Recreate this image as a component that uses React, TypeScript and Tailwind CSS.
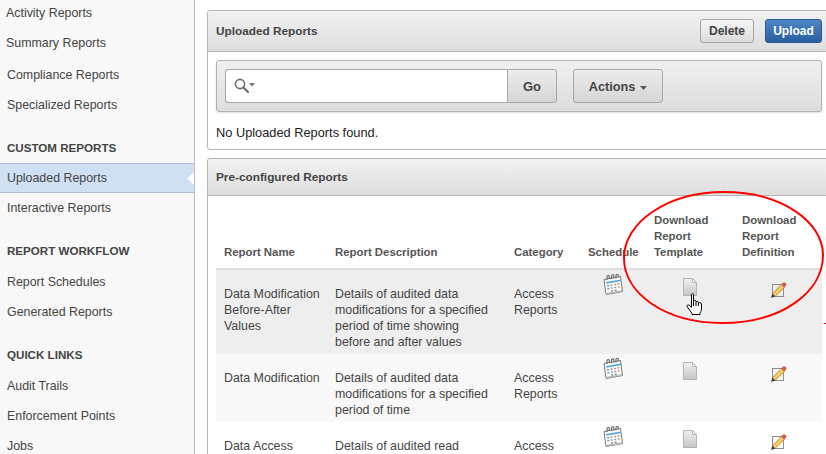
import React from 'react';

type NavItem = { label: string; shift?: boolean; size?: string; active?: boolean };

const CalendarIcon = () => (
  <svg width="22" height="22" viewBox="0 0 22 22" className="block">
    <path d="M2 5.5 L18.5 2.5 L20.5 17.5 L4 20.5 Z" fill="#fff" stroke="#777" strokeWidth="1" />
    <path d="M3 19 L4 20.5 L20.5 17.5 L20 16 Z" fill="#bbb" />
    <path d="M4 8 L18.5 5.5 L18.9 7.2 L4.3 9.7 Z" fill="#5aa8dc" />
    <g fill="#8a8a8a">
      <rect x="5" y="11" width="2" height="1.4" />
      <rect x="8.5" y="10.4" width="2" height="1.4" />
      <rect x="12" y="9.8" width="2" height="1.4" fill="#d08a70" />
      <rect x="15.5" y="9.2" width="2" height="1.4" />
      <rect x="5.3" y="14" width="2" height="1.4" />
      <rect x="8.8" y="13.4" width="2" height="1.4" fill="#5aa8dc" />
      <rect x="12.3" y="12.8" width="2" height="1.4" />
      <rect x="15.8" y="12.2" width="2" height="1.4" fill="#d08a70" />
      <rect x="9" y="16.2" width="2" height="1.4" />
      <rect x="12.6" y="15.6" width="2" height="1.4" />
    </g>
    <g fill="none" stroke="#666" strokeWidth="1.1">
      <path d="M5 6 V2.6 a1.2 1.2 0 0 1 2.3 -0.3 V5" />
      <path d="M9.5 5.2 V1.9 a1.2 1.2 0 0 1 2.3 -0.3 V4.4" />
      <path d="M14 4.4 V1.2 a1.2 1.2 0 0 1 2.3 -0.3 V3.6" />
    </g>
  </svg>
);

const DocIcon = ({ id }: { id: string }) => (
  <svg width="14" height="18" viewBox="0 0 14 18" className="block">
    <defs>
      <linearGradient id={id} x1="0" y1="0" x2="0" y2="1">
        <stop offset="0" stopColor="#f2f2f2" />
        <stop offset="1" stopColor="#c4c4c4" />
      </linearGradient>
    </defs>
    <path d="M0.5 0.5 H9.5 L13.5 4.5 V17.5 H0.5 Z" fill={`url(#${id})`} stroke="#b4b4b4" />
    <path d="M9.5 0.5 V4.5 H13.5 Z" fill="#fafafa" stroke="#b4b4b4" />
  </svg>
);

const PencilIcon = () => (
  <svg width="17" height="17" viewBox="0 0 17 17" className="block">
    <rect x="2.5" y="2.5" width="11" height="12" fill="none" stroke="#8c8c8c" />
    <path d="M2.4 11.6 L11.2 2.4 L14.4 5.4 L5.2 14.6 Z" fill="#f0bd4a" stroke="#9a7a2c" strokeWidth="0.5" />
    <path d="M3.8 13.2 L12.8 3.9" stroke="#fbe6a6" strokeWidth="1" fill="none" />
    <path d="M11.2 2.4 L12.6 1 A1.8 1.8 0 0 1 15.7 4 L14.4 5.4 Z" fill="#c8604a" />
    <path d="M1 16 L2.4 11.6 L5.2 14.6 Z" fill="#3a3a3a" />
  </svg>
);

const HandCursor = () => (
  <svg width="17" height="23" viewBox="0 0 17 23" className="block">
    <path
      d="M5.5 1.5 C5.5 0.5 7.5 0.5 7.5 1.5 V8 C8 7.2 9.8 7.2 10 8 V9 C10.4 8.2 12.2 8.2 12.4 9.2 V10 C13 9.4 15.5 9.6 15.5 11 V16 C15.5 18 14.5 19 14 20 V21.5 H6 V20.5 C4.5 18.5 3 16 1.2 13.8 C0.3 12.6 2 11.2 3.2 12.2 L5.5 14.3 Z"
      fill="#fff"
      stroke="#000"
      strokeWidth="1"
    />
    <path d="M7.5 8 V13 M10 9 V13 M12.4 10 V13" stroke="#000" strokeWidth="1" fill="none" />
  </svg>
);

const navGroups: { title?: string; gap?: string; titleGap?: string; items: NavItem[] }[] = [
  {
    items: [
      { label: 'Activity Reports', shift: true },
      { label: 'Summary Reports', shift: true },
      { label: 'Compliance Reports', size: 'h-[32px] pt-[2px]' },
      { label: 'Specialized Reports' },
    ],
  },
  {
    title: 'CUSTOM REPORTS',
    gap: 'mt-[12px]',
    titleGap: 'mb-[1px] pt-[2px]',
    items: [{ label: 'Uploaded Reports', active: true }, { label: 'Interactive Reports', size: 'h-[31px]' }],
  },
  {
    title: 'REPORT WORKFLOW',
    gap: 'mt-[11px]',
    titleGap: 'mb-[2px] pt-[2px]',
    items: [{ label: 'Report Schedules' }, { label: 'Generated Reports' }],
  },
  {
    title: 'QUICK LINKS',
    gap: 'mt-[13px]',
    titleGap: 'mb-[1px]',
    items: [{ label: 'Audit Trails' }, { label: 'Enforcement Points' }, { label: 'Jobs' }],
  },
];

const rows = [
  {
    name: ['Data Modification', 'Before-After', 'Values'],
    desc: ['Details of audited data', 'modifications for a specified', 'period of time showing', 'before and after values'],
    category: ['Access', 'Reports'],
    bg: 'bg-[#eeeeee]',
  },
  {
    name: ['Data Modification'],
    desc: ['Details of audited data', 'modifications for a specified', 'period of time'],
    category: ['Access', 'Reports'],
    bg: 'bg-[#f8f8f8]',
  },
  {
    name: ['Data Access'],
    desc: ['Details of audited read'],
    category: ['Access'],
    bg: 'bg-white',
  },
];

function Sidebar() {
  return (
    <aside className="w-[195px] shrink-0 h-[454px] overflow-hidden bg-[#f8f8f8] border-r border-[#bdbdbd]">
      <div className="-mt-[2px]">
        {navGroups.map((group, i) => (
          <div key={i} className={group.gap}>
            {group.title && (
              <div className={`h-[30px] pl-[7px] flex items-center font-bold text-[11.6px] text-[#444] ${group.titleGap ?? ''}`}>
                {group.title}
              </div>
            )}
            {group.items.map((item) => (
              <div
                key={item.label}
                className={`relative flex items-center text-[12.4px] text-[#444] ${item.shift ? 'pl-[6px]' : 'pl-[7px]'} ${
                  item.size ?? 'h-[30px]'
                } ${item.active ? 'bg-[#d0e0f3] border-y border-[#b2bdcb]' : ''}`}
              >
                {item.label}
                {item.active && (
                  <span className="absolute right-0 top-[8px] w-[7px] h-[13px] bg-white [clip-path:polygon(100%_0,0_50%,100%_100%)]" />
                )}
              </div>
            ))}
          </div>
        ))}
      </div>
    </aside>
  );
}

function PanelHeader({ title, tall, children }: { title: string; tall?: boolean; children?: React.ReactNode }) {
  return (
    <div
      className={`flex items-center justify-between pl-[8px] pr-[7px] border-b border-[#b5b5b5] bg-gradient-to-b from-[#f1f1f1] to-[#dedede] rounded-t-[3px] ${
        tall ? 'h-[41px]' : 'h-[37px]'
      }`}
    >
      <span className="pt-[1px] font-bold text-[11.8px] text-[#444]">{title}</span>
      {children}
    </div>
  );
}

function UploadedPanel() {
  return (
    <section className="w-[623px] h-[140px] border border-[#b5b5b5] rounded-[3px] bg-white">
      <PanelHeader title="Uploaded Reports" tall>
        <div className="flex gap-[11px]">
          <button className="w-[54px] h-[24px] rounded-[3px] border border-[#a3a3a3] bg-gradient-to-b from-[#f6f6f6] to-[#dcdcdc] font-bold text-[12px] text-[#444]">
            Delete
          </button>
          <button className="w-[57px] h-[24px] rounded-[3px] border border-[#2a5a98] bg-gradient-to-b from-[#4f86c6] to-[#2a5f9f] font-bold text-[12px] text-white">
            Upload
          </button>
        </div>
      </PanelHeader>
      <div className="mx-[8px] mt-[8px] w-[606px] h-[52px] flex items-center pl-[8px] gap-[16px] border border-[#b0b0b0] rounded-[3px] bg-gradient-to-b from-[#f0f0f0] to-[#dddddd] shadow-[0_1px_2px_rgba(0,0,0,0.12)]">
        <div className="flex h-[34px]">
          <div className="w-[282px] bg-white border border-[#a8a8a8] border-r-0 rounded-l-[3px] flex items-center pl-[8px]">
            <svg width="22" height="16" viewBox="0 0 22 16" className="block">
              <circle cx="6" cy="6" r="4.6" fill="none" stroke="#6e6e6e" strokeWidth="1.6" />
              <path d="M9.5 9.5 L14 14" stroke="#6e6e6e" strokeWidth="2.2" strokeLinecap="round" />
              <path d="M15 5 H21 L18 8.5 Z" fill="#777" />
            </svg>
          </div>
          <button className="w-[50px] pt-[2px] rounded-r-[3px] border border-[#a8a8a8] bg-gradient-to-b from-[#ececec] to-[#d6d6d6] font-bold text-[13px] text-[#444]">
            Go
          </button>
        </div>
        <button className="w-[90px] h-[34px] pt-[3px] flex items-center justify-center gap-[5px] rounded-[3px] border border-[#a8a8a8] bg-gradient-to-b from-[#ececec] to-[#d6d6d6] font-bold text-[12.7px] text-[#444]">
          Actions
          <svg width="7" height="4" viewBox="0 0 7 4" className="block">
            <path d="M0 0 H7 L3.5 4 Z" fill="#555" />
          </svg>
        </button>
      </div>
      <p className="pl-[8px] mt-[13px] text-[12.8px] leading-[16px] text-[#222]">No Uploaded Reports found.</p>
    </section>
  );
}

function ReportsPanel() {
  return (
    <section className="mt-[8px] w-[623px] border border-[#b5b5b5] rounded-[3px] bg-white">
      <PanelHeader title="Pre-configured Reports" />
      <table className="ml-[8px] w-[606px] table-fixed border-collapse text-[12.4px] leading-[16px] text-[#444]">
        <colgroup>
          <col className="w-[111px]" />
          <col className="w-[179px]" />
          <col className="w-[74px]" />
          <col className="w-[66px]" />
          <col className="w-[88px]" />
          <col className="w-[88px]" />
        </colgroup>
        <thead>
          <tr className="border-b-[2px] border-[#dddddd] text-[#555] text-[11.4px]">
            <th className="h-[73px] px-[8px] pb-[8px] align-bottom text-left font-bold">Report Name</th>
            <th className="px-[8px] pb-[8px] align-bottom text-left font-bold">Report Description</th>
            <th className="px-[8px] pb-[8px] align-bottom text-left font-bold">Category</th>
            <th className="px-[8px] pb-[8px] align-bottom text-left font-bold whitespace-nowrap">Schedule</th>
            <th className="px-[8px] pb-[8px] align-bottom text-left font-bold">
              Download
              <br />
              Report
              <br />
              Template
            </th>
            <th className="px-[8px] pb-[8px] align-bottom text-left font-bold">
              Download
              <br />
              Report
              <br />
              Definition
            </th>
          </tr>
        </thead>
        <tbody>
          {rows.map((row, i) => (
            <tr key={i} className={row.bg}>
              <td className="px-[8px] pt-[16px] pb-[4px] align-top whitespace-nowrap">
                {row.name.map((line) => (
                  <div key={line}>{line}</div>
                ))}
              </td>
              <td className="px-[8px] pt-[16px] pb-[4px] align-top whitespace-nowrap">
                {row.desc.map((line) => (
                  <div key={line}>{line}</div>
                ))}
              </td>
              <td className="px-[8px] pt-[16px] pb-[4px] align-top">
                {row.category.map((line) => (
                  <div key={line}>{line}</div>
                ))}
              </td>
              <td className="pl-[22px] pt-[4px] align-top">
                <CalendarIcon />
              </td>
              <td className="pl-[37px] pt-[8px] align-top">
                <DocIcon id={`docFill${i}`} />
              </td>
              <td className="pl-[36px] pt-[12px] align-top">
                <PencilIcon />
              </td>
            </tr>
          ))}
        </tbody>
      </table>
    </section>
  );
}

export default function App() {
  return (
    <div className="relative w-[826px] h-[454px] overflow-hidden flex bg-white font-['Liberation_Sans',Arial,sans-serif]">
      <Sidebar />
      <main className="flex-1 min-w-0 pl-[12px] pt-[10px]">
        <UploadedPanel />
        <ReportsPanel />
      </main>

      {/* hand drawn annotation over the table */}
      <svg className="absolute left-0 top-0 pointer-events-none" width="826" height="454" viewBox="0 0 826 454">
        <path
          d="M624 258 C624 222 668 192 724 192 C782 192 823 222 823 255 C823 292 782 323 722 323 C666 323 624 294 624 258 Z"
          fill="none"
          stroke="#ff0000"
          strokeWidth="2"
        />
        <rect x="824" y="323" width="2" height="1" fill="#ff0000" />
      </svg>
      <div className="absolute left-[686px] top-[293px]">
        <HandCursor />
      </div>
    </div>
  );
}
